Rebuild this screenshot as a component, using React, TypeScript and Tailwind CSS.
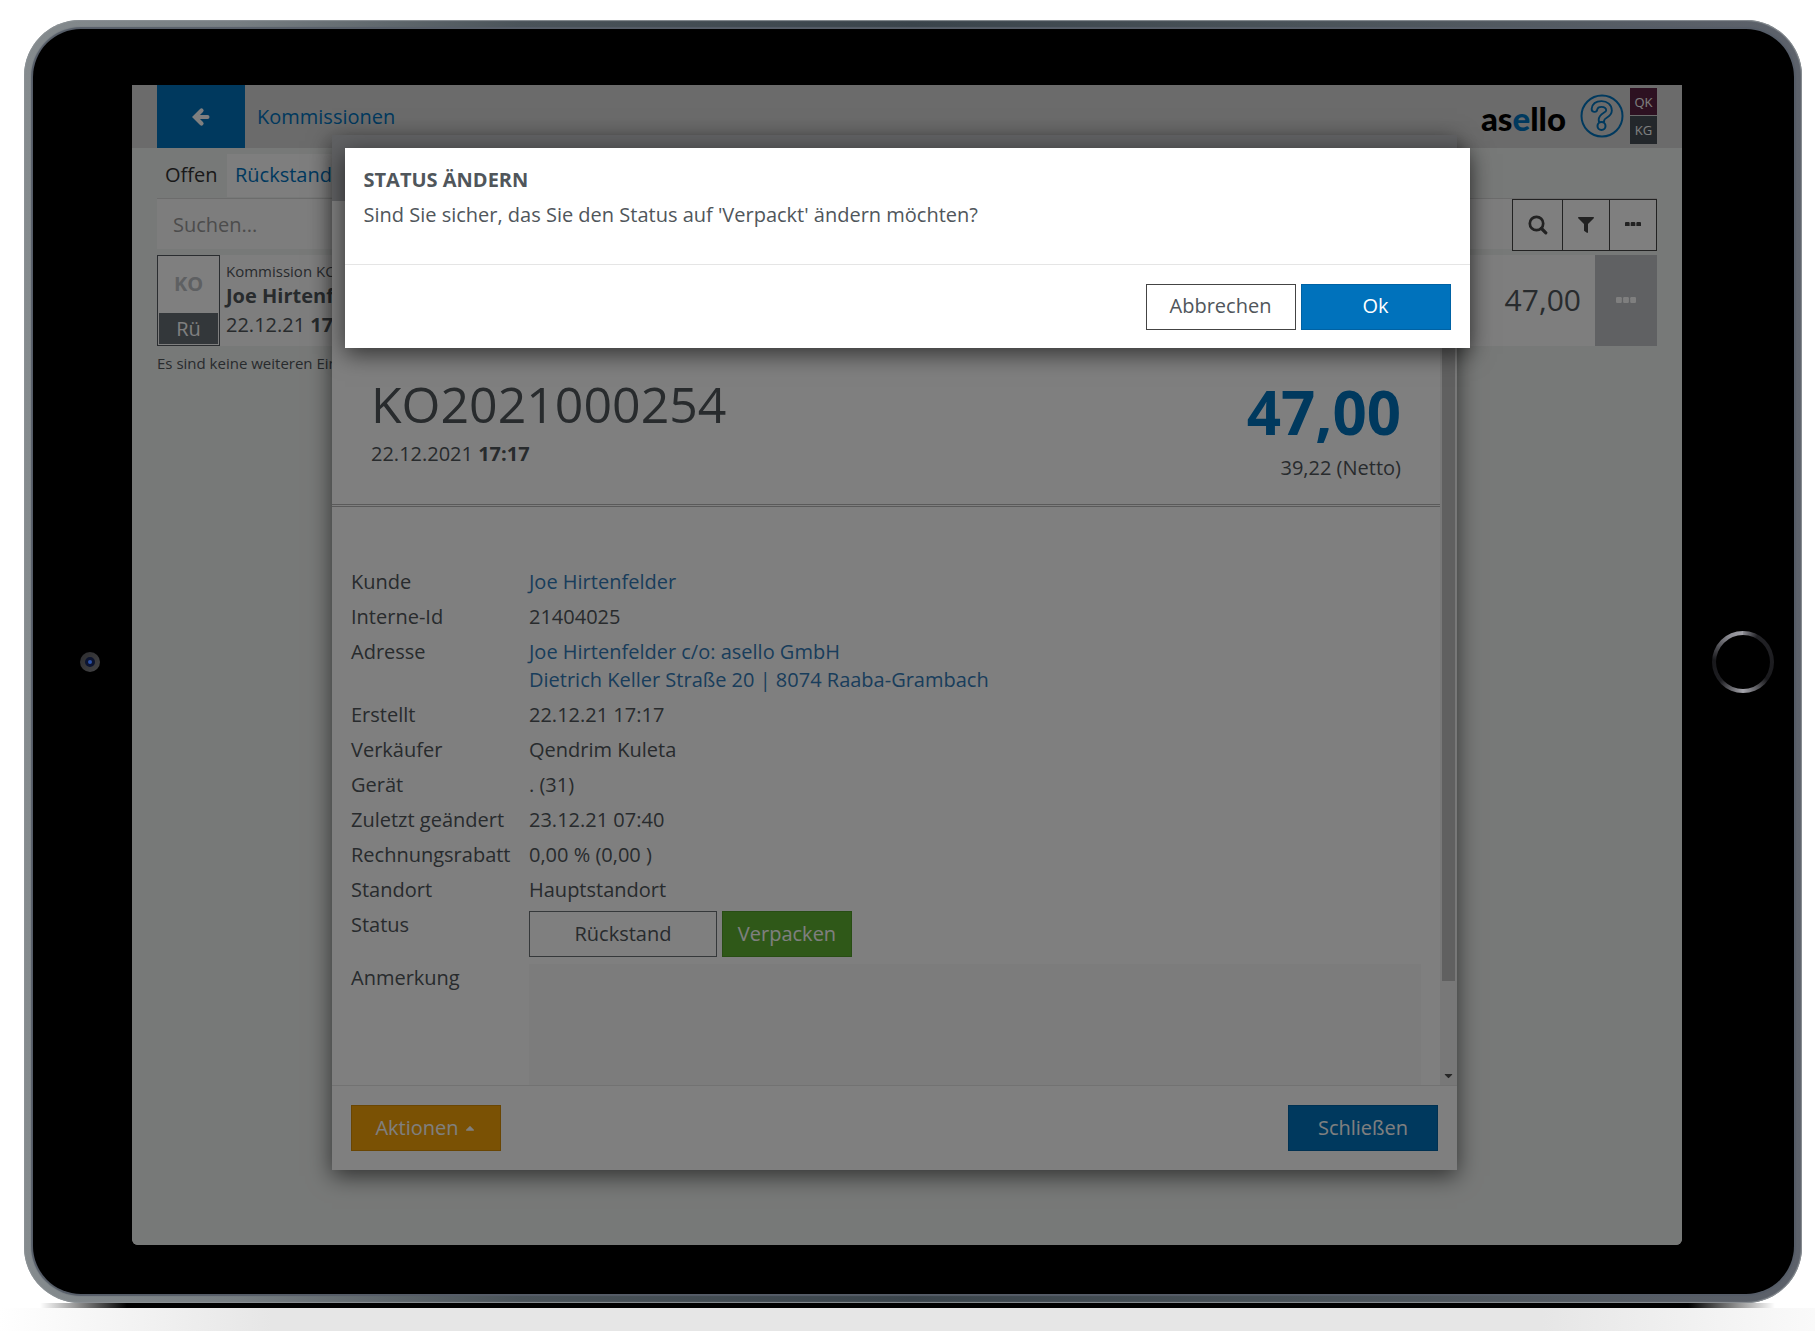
import type { ReactNode } from 'react';
import { FaCaretDown, FaCaretUp, FaFilter } from 'react-icons/fa';

interface DetailRowProps {
  label: string;
  children: ReactNode;
}

function DetailRow({ label, children }: DetailRowProps) {
  return (
    <div className="flex">
      <dt className="w-[178px] shrink-0">{label}</dt>
      <dd className="min-w-0 flex-1">{children}</dd>
    </div>
  );
}

function ArrowLeftIcon() {
  return (
    <svg viewBox="0 0 20 20" className="size-5" fill="none" stroke="currentColor" aria-hidden="true">
      <path d="M10.500 3.500L4 10l6.500 6.500" strokeWidth="4.200" strokeLinecap="round" strokeLinejoin="miter" />
      <path d="M5 10h11.500" strokeWidth="4" strokeLinecap="round" />
    </svg>
  );
}

function SearchIcon() {
  return (
    <svg viewBox="0 0 20 20" className="size-5" fill="none" stroke="currentColor" aria-hidden="true">
      <circle cx="8.500" cy="8.500" r="6.700" strokeWidth="2.700" />
      <path d="M13.500 13.500l4.300 4.300" strokeWidth="3.200" strokeLinecap="round" />
    </svg>
  );
}

function DotsIcon({ className }: { className: string }) {
  return (
    <svg viewBox="0 0 20 6" className={className} fill="currentColor" aria-hidden="true">
      <rect x="0" y="0" width="5.800" height="6" rx="1.200" />
      <rect x="7.100" y="0" width="5.800" height="6" rx="1.200" />
      <rect x="14.200" y="0" width="5.800" height="6" rx="1.200" />
    </svg>
  );
}

function HelpIcon() {
  const mark = 'M14.500 15C15 11.500 17.500 10 21.500 10C26 10 29 12.500 29 16.500C29 21.500 21.500 21 21.500 26';
  return (
    <svg viewBox="0 0 44 44" className="size-11" fill="none" aria-hidden="true">
      <circle cx="22" cy="22" r="20.500" stroke="#0072bc" strokeWidth="2" />
      <path d={mark} stroke="#0072bc" strokeWidth="7.500" strokeLinecap="round" strokeLinejoin="round" />
      <path d={mark} stroke="#d6d6d6" strokeWidth="3.800" strokeLinecap="round" strokeLinejoin="round" />
      <circle cx="21.500" cy="32" r="4" fill="#d6d6d6" stroke="#0072bc" strokeWidth="2" />
    </svg>
  );
}

function AppHeader() {
  return (
    <header className="flex h-[63px] items-center bg-[#d6d6d6] px-[25px]">
      <button className="flex h-full w-[88px] items-center justify-center bg-[#0072bc] text-white" aria-label="Zurück">
        <ArrowLeftIcon />
      </button>
      <a href="#kommissionen" className="ml-3 text-[#0072bc]">
        Kommissionen
      </a>
      <div className="mb-0.5 ml-auto flex items-center">
        <span className="mt-1 mr-[14px] font-['Lato',sans-serif] text-[33px] font-black text-black">
          as<span className="text-[#0072bc]">e</span>llo
        </span>
        <button aria-label="Hilfe">
          <HelpIcon />
        </button>
        <div className="ml-1.5 flex flex-col gap-px text-center text-[13px] leading-7 text-white">
          <span className="h-[27px] w-[27px] bg-[#5a2342]">QK</span>
          <span className="h-7 w-[27px] bg-[#464f57]">KG</span>
        </div>
      </div>
    </header>
  );
}

function OrderList() {
  return (
    <main className="px-[25px]">
      <nav className="flex border-b border-[#d8d8d8] pt-1.5">
        <a href="#offen" className="h-[44px] w-[70px] pl-2 leading-[42px] text-[#333]">
          Offen
        </a>
        <a href="#rueckstand" className="h-[43px] bg-[#fcfcfc] px-2 leading-[42px] text-[#0072bc]">
          Rückstand
        </a>
      </nav>

      <div className="flex h-[52px]">
        <input
          type="text"
          aria-label="Suchen"
          placeholder="Suchen..."
          className="h-[50px] min-w-0 flex-1 bg-[#fbfbfb] px-4 placeholder:text-[#999]"
        />
        <div className="flex border border-[#444] bg-white text-[#444]">
          <button className="flex w-[50px] items-center justify-center border-r border-[#444]" aria-label="Suche starten">
            <SearchIcon />
          </button>
          <button className="flex w-[47px] items-center justify-center border-r border-[#444]" aria-label="Filter">
            <FaFilter size={16} />
          </button>
          <button className="flex w-[46px] items-center justify-center" aria-label="Mehr">
            <DotsIcon className="mb-0.5 w-4" />
          </button>
        </div>
      </div>

      <div className="mt-1 flex h-[91px] bg-[#fcfcfc]">
        <div className="flex w-[63px] flex-col border border-[#555b60] bg-white p-px text-center">
          <span className="flex-1 leading-[54px] font-bold text-[#bcc0c4]">KO</span>
          <span className="h-[31px] bg-[#666e74] leading-[31px] text-white">Rü</span>
        </div>
        <div className="flex-1 pt-1.5 pl-1.5">
          <p className="text-[15px] leading-5">Kommission KO2021000254</p>
          <p className="leading-[30px] font-bold">Joe Hirtenfelder</p>
          <p className="leading-7">
            22.12.21 <strong>17:17</strong>
          </p>
        </div>
        <span className="pr-[14px] text-[30px] leading-[90px]">47,00</span>
        <button className="flex w-[62px] items-center justify-center bg-[#c0c2c6] text-white" aria-label="Aktionen">
          <DotsIcon className="mb-0.5 w-5" />
        </button>
      </div>
      <p className="mt-[5px] text-[15px] leading-6">Es sind keine weiteren Einträge vorhanden</p>
    </main>
  );
}

function OrderModal() {
  return (
    <section className="flex h-[1035px] w-full max-w-[1125px] flex-col bg-white shadow-[0_6px_22px_rgba(0,0,0,0.6)]">
      <div className="h-[66px] shrink-0 bg-[#c0c2c6]" />
      <div className="flex min-h-0 flex-1">
        <div className="min-w-0 flex-1 overflow-hidden">
          <div className="flex h-[306px] items-end justify-between border-b-3 border-double border-[#b4b4b4] px-[39px]">
            <div className="pb-9">
              <h1 className="text-[50px] leading-[72px]">KO2021000254</h1>
              <p className="leading-7">
                22.12.2021 <strong>17:17</strong>
              </p>
            </div>
            <div className="pb-[22px] text-right">
              <p className="text-[60px] leading-[84px] font-bold text-[#0072bc]">47,00</p>
              <p className="leading-7">39,22 (Netto)</p>
            </div>
          </div>
          <dl className="flex flex-col gap-[7px] px-[19px] pt-[61px]">
            <DetailRow label="Kunde">
              <a href="#kunde" className="text-[#337ab7]">Joe Hirtenfelder</a>
            </DetailRow>
            <DetailRow label="Interne-Id">21404025</DetailRow>
            <DetailRow label="Adresse">
              <a href="#adresse" className="text-[#337ab7]">
                Joe Hirtenfelder c/o: asello GmbH
                <br />
                Dietrich Keller Straße 20 | 8074 Raaba-Grambach
              </a>
            </DetailRow>
            <DetailRow label="Erstellt">22.12.21 17:17</DetailRow>
            <DetailRow label="Verkäufer">Qendrim Kuleta</DetailRow>
            <DetailRow label="Gerät">. (31)</DetailRow>
            <DetailRow label="Zuletzt geändert">23.12.21 07:40</DetailRow>
            <DetailRow label="Rechnungsrabatt">0,00 % (0,00 )</DetailRow>
            <DetailRow label="Standort">Hauptstandort</DetailRow>
            <DetailRow label="Status">
              <div className="flex gap-[5px]">
                <button className="h-[46px] w-[188px] border border-[#6b7075]">Rückstand</button>
                <button className="h-[46px] w-[130px] border border-[#509a28] bg-[#5eb030] font-medium text-white">
                  Verpacken
                </button>
              </div>
            </DetailRow>
            <div className="flex">
              <dt className="w-[178px] shrink-0">
                <label htmlFor="note">Anmerkung</label>
              </dt>
              <dd className="min-w-0 flex-1">
                <textarea id="note" className="block h-40 w-full bg-[#f8f8f8]" />
              </dd>
            </div>
          </dl>
        </div>
        {/* Scrollbar */}
        <div className="flex w-[17px] flex-col items-center justify-between bg-[#f1f1f1]">
          <div className="h-[780px] w-[13px] bg-[#c1c1c1]" />
          <FaCaretDown size={13} className="mb-[3px] text-[#505050]" />
        </div>
      </div>
      <div className="flex items-start justify-between border-t border-[#e5e5e5] p-[19px]">
        <button className="flex h-[46px] w-[150px] items-center justify-center gap-1 border border-[#d48c06] bg-[#f4a208] text-white">
          Aktionen <FaCaretUp size={14} />
        </button>
        <button className="h-[46px] w-[150px] border border-[#0062a4] bg-[#0072bc] text-white">Schließen</button>
      </div>
    </section>
  );
}

function ConfirmDialog() {
  return (
    <div
      role="dialog"
      aria-labelledby="confirm-title"
      className="w-full max-w-[1125px] bg-white shadow-[0_6px_22px_rgba(0,0,0,0.6)]"
    >
      <div className="h-[117px] border-b border-[#e5e5e5] px-[19px] pt-[17px]">
        <h2 id="confirm-title" className="leading-[30px] font-bold">STATUS ÄNDERN</h2>
        <p className="leading-10">Sind Sie sicher, das Sie den Status auf 'Verpackt' ändern möchten?</p>
      </div>
      <div className="flex justify-end gap-[5px] px-[19px] pt-[19px] pb-[18px]">
        <button className="h-[46px] w-[150px] border border-[#444] pb-0.5">Abbrechen</button>
        <button className="h-[46px] w-[150px] border border-[#0062a4] bg-[#0072bc] pb-0.5 font-medium text-white">
          Ok
        </button>
      </div>
    </div>
  );
}

export default function App() {
  return (
    <div className="bg-white pt-5 font-['Open_Sans','Noto_Sans',sans-serif] text-[20px] leading-7 text-[#50565b]">
      {/* Tablet body */}
      <div className="mr-[13px] ml-6 rounded-[56px] bg-[linear-gradient(90deg,#858b8e_0%,#777e82_12%,#4a5359_28%,#3a444b_50%,#4a5359_72%,#5d626b_100%)] p-[9px] pr-2 shadow-[inset_0_0_1px_1px_#8b9195]">
        <div className="flex items-center rounded-[48px] bg-black shadow-[0_0_1px_2px_#565d68]">
          <div className="flex w-[99px] shrink-0 justify-center pl-[15px]">
            <div className="flex size-5 items-center justify-center rounded-full bg-linear-to-br from-[#2c2c2e] to-[#444446]">
              <div className="size-2.5 rounded-full border-3 border-[#0c1430] bg-[#2a50a8]" />
            </div>
          </div>

          <div className="relative mt-14 mb-[49px] min-h-[1160px] min-w-0 flex-1 overflow-hidden rounded-b-md bg-[#eff2f0]">
            <AppHeader />
            <OrderList />
            <div className="absolute inset-0 flex items-start justify-center pt-[50px] pr-[25px]">
              <OrderModal />
            </div>
            <div className="absolute inset-0 flex items-start justify-center bg-black/50 pt-[63px]">
              <ConfirmDialog />
            </div>
          </div>

          <div className="flex w-[112px] shrink-0 justify-center pl-[10px]">
            <div className="size-[62px] rounded-full bg-conic-[from_0deg,#8b8b92,#222226_8%,#1a1a1d_35%,#a5a5ac_50%,#1e1e22_64%,#18181b_76%,#8b8b92_92%,#a0a0a6] p-1">
              <div className="size-full rounded-full bg-black" />
            </div>
          </div>
        </div>
      </div>
      {/* Ground shadow */}
      <div className="mx-10 h-[5px] bg-[linear-gradient(90deg,transparent,#000_5%,#000_95%,transparent)]" />
      <div className="h-[23px] bg-[linear-gradient(90deg,#fff,#e6e6e6_15%,#e6e6e6_85%,#fafafa)]" />
    </div>
  );
}
